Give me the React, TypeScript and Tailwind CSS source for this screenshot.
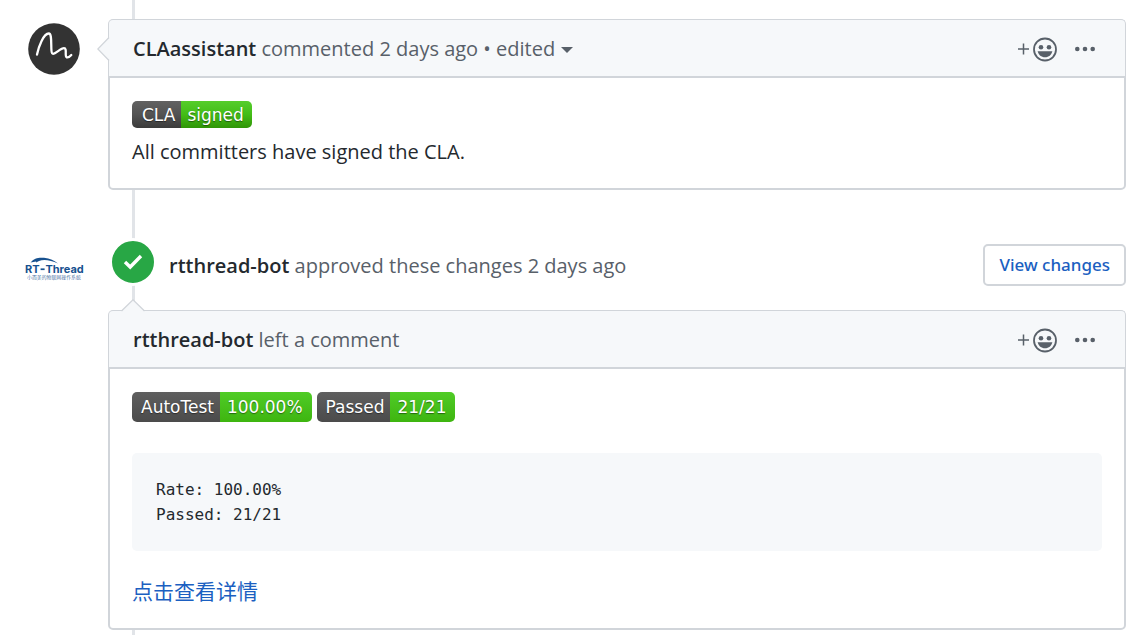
import type { ReactNode } from "react";

const sans = "font-['Open_Sans','Noto_Sans_CJK_SC',sans-serif]";

function SmileyIcon() {
  return (
    <svg width="40" height="26" viewBox="0 0 40 26" fill="none" aria-hidden="true">
      <path d="M1 13H12M6.5 7.5V18.5" stroke="currentColor" strokeWidth="1.5" />
      <circle cx="28" cy="13.5" r="11" stroke="currentColor" strokeWidth="1.8" />
      <circle cx="24" cy="11.2" r="2.3" fill="currentColor" />
      <circle cx="32" cy="11.2" r="2.3" fill="currentColor" />
      <path d="M20.6 15.2H35.4C34.4 19 31.8 21.2 28 21.2S21.6 19 20.6 15.2Z" fill="currentColor" />
    </svg>
  );
}

function HeaderActions() {
  return (
    <div className="flex items-center gap-[18px] pt-0.5 text-[#586069]">
      <button type="button" aria-label="Add your reaction" className="block">
        <SmileyIcon />
      </button>
      <button type="button" aria-label="Show options" className="block">
        <svg width="20" height="26" viewBox="0 0 20 26" fill="currentColor" aria-hidden="true">
          <circle cx="2.3" cy="13" r="2.3" />
          <circle cx="10" cy="13" r="2.3" />
          <circle cx="17.7" cy="13" r="2.3" />
        </svg>
      </button>
    </div>
  );
}

function CommentCard({ title, arrow, children }: { title: ReactNode; arrow: ReactNode; children: ReactNode }) {
  return (
    <article className="relative">
      <header className="flex h-[57px] items-center justify-between rounded-t-[5px] border-x border-t border-[#d1d5da] bg-[#f6f8fa] pr-[30px] pl-6 text-[20px] text-[#586069]">
        <h3 className="pt-0.5">{title}</h3>
        <HeaderActions />
      </header>
      {arrow}
      <div className="rounded-b-[5px] border-2 border-[#d1d5da] bg-white px-[22px]">{children}</div>
    </article>
  );
}

function Author({ name }: { name: string }) {
  return (
    <a href="#author" className="font-semibold text-[#24292e]">
      {name}
    </a>
  );
}

function Badge({ label, value, glossy = false }: { label: string; value: string; glossy?: boolean }) {
  const size = glossy ? "h-[27px]" : "h-[30px]";
  const left = glossy
    ? "bg-linear-to-b from-[#626262] via-[#535353] to-[#3b3b3b] pr-1.5 pl-2.5"
    : "bg-linear-to-b from-[#5f5f5f] to-[#4b4b4b] pr-1.5 pl-[9px]";
  const right = glossy
    ? "bg-linear-to-b from-[#55cd2b] via-[#43bd16] to-[#309507] pr-2 pl-1.5"
    : "bg-linear-to-b from-[#50cc26] to-[#3eb50f] pr-[9px] pl-[7px]";
  return (
    <span
      className={`inline-flex overflow-hidden rounded-[5px] font-['DejaVu_Sans',sans-serif] text-[17px] text-white [text-shadow:0_1px_1px_rgba(0,0,0,0.45)] ${size}`}
    >
      <span className={`flex items-center pt-0.5 ${left}`}>{label}</span>
      <span className={`flex items-center pt-0.5 ${right}`}>{value}</span>
    </span>
  );
}

function ClaAvatar() {
  return (
    <svg width="52" height="52" viewBox="0 0 52 52" role="img" aria-label="CLAassistant">
      <circle cx="26" cy="26" r="25.8" fill="#333" />
      <path
        d="M9 31.5C10.5 24 15.5 10.5 20.8 10.5C25.2 10.5 21.5 30.8 25 30.8C28 30.8 32.5 25.2 36 25.2C39.5 25.2 36.3 33.4 38.7 34.3C40.3 34.7 42 33.5 43.3 32"
        fill="none"
        stroke="#fff"
        strokeWidth="2.3"
        strokeLinecap="round"
        strokeLinejoin="round"
      />
    </svg>
  );
}

function RtThreadLogo() {
  return (
    <svg width="60" height="26" viewBox="0 0 60 26" role="img" aria-label="RT-Thread" fill="#17518f">
      <path d="M5.5 5.6C9 1 14 .2 19 .8C25 1.6 29.5 3.6 33 6.6C26 3.2 19 2.2 14 3.9L11 5.6L11.2 4.6L5.5 5.6Z" />
      <g fontSize="11" fontWeight="700" fontFamily="Inter, sans-serif">
        <text x="0" y="16">RT</text>
        <rect x="15.6" y="11.4" width="4" height="1.7" />
        <text x="20.4" y="16">Thread</text>
      </g>
      <text x="2" y="22" fontSize="4.9" fontFamily="'Noto Sans CJK SC', sans-serif" fillOpacity="0.85">
        小而美的物联网操作系统
      </text>
    </svg>
  );
}

export default function App() {
  return (
    <main className={`relative min-h-screen bg-white pr-[15px] pb-[5px] text-[#24292e] ${sans}`}>
      <div className="absolute inset-y-0 left-[132px] w-[3px] bg-[#e1e4e8]" />

      <section className="relative grid grid-cols-[108px_1fr] pt-[19px]">
        <div className="pt-1 pl-7">
          <ClaAvatar />
        </div>
        <CommentCard
          title={
            <>
              <Author name="CLAassistant" /> commented{" "}
              <a href="#comment">2 days ago</a> •{" "}
              <button type="button">
                edited
                <svg className="ml-1.5 inline-block" width="12" height="7" viewBox="0 0 12 7" fill="currentColor" aria-hidden="true">
                  <path d="M0 0H12L6 6Z" />
                </svg>
              </button>
            </>
          }
          arrow={
            <svg className="absolute top-[17px] -left-[11px]" width="13" height="26" viewBox="0 0 13 26" aria-hidden="true">
              <path d="M13 1L1 13L13 25Z" fill="#f6f8fa" />
              <path d="M12 1.5L.8 13L12 24.5" fill="none" stroke="#d1d5da" strokeWidth="1.3" />
            </svg>
          }
        >
          <div className="flex flex-col items-start pt-[23px] pb-5">
            <Badge label="CLA" value="signed" glossy />
            <p className="mt-2 text-[20px] leading-8">All committers have signed the CLA.</p>
          </div>
        </CommentCard>
      </section>

      <section className="relative grid grid-cols-[108px_1fr] pt-12">
        <div className="pt-[19px] pl-[25px]">
          <RtThreadLogo />
        </div>
        <div className="flex items-start">
          <span className="ml-px grid size-12 shrink-0 place-items-center rounded-full border-3 border-white bg-[#28a745]">
            <svg width="20" height="16" viewBox="0 0 20 16" fill="none" aria-hidden="true">
              <path d="M2 8L7.2 13L18 2" stroke="#fff" strokeWidth="3.4" />
            </svg>
          </span>
          <p className="ml-3 flex-1 pt-3 text-[20px] leading-8 text-[#586069]">
            <Author name="rtthread-bot" /> approved these changes <a href="#review">2 days ago</a>
          </p>
          <a
            href="#changes"
            className="mt-1.5 flex h-[42px] items-center rounded-[5px] border-2 border-[#d1d5da] bg-white px-3.5 font-['Noto_Sans',sans-serif] text-[17px] font-medium text-[#1b5fc1]"
          >
            View changes
          </a>
        </div>
      </section>

      <section className="relative pt-6 pl-[108px]">
        <CommentCard
          title={
            <>
              <Author name="rtthread-bot" /> left a comment
            </>
          }
          arrow={
            <svg className="absolute -top-[11px] left-3" width="26" height="13" viewBox="0 0 26 13" aria-hidden="true">
              <path d="M1 13L13 1L25 13Z" fill="#f6f8fa" />
              <path d="M1.5 12L13 .8L24.5 12" fill="none" stroke="#d1d5da" strokeWidth="1.3" />
            </svg>
          }
        >
          <div className="flex gap-[5px] pt-[23px]">
            <Badge label="AutoTest" value="100.00%" />
            <Badge label="Passed" value="21/21" />
          </div>
          <pre className="mt-[31px] rounded-[5px] bg-[#f6f8fa] p-6 font-['DejaVu_Sans_Mono',monospace] text-[16px] leading-[25px]">
            {"Rate: 100.00%\nPassed: 21/21"}
          </pre>
          <p className="pt-[23px] pb-[21px] text-[21px] leading-8">
            <a href="#details" className="font-['Noto_Sans_CJK_SC',sans-serif] text-[#1b5fc1]">
              点击查看详情
            </a>
          </p>
        </CommentCard>
      </section>
    </main>
  );
}
